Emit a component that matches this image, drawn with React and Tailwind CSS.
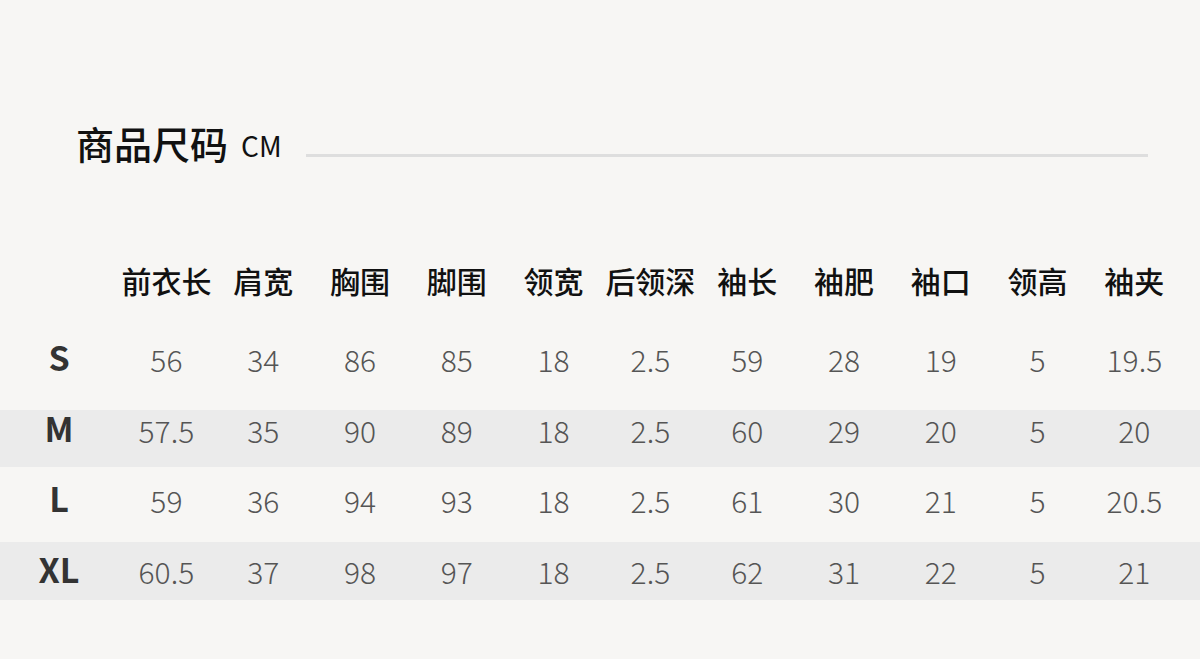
import React from "react";

const headers = ["前衣长", "肩宽", "胸围", "脚围", "领宽", "后领深", "袖长", "袖肥", "袖口", "领高", "袖夹"];

const rows = [
  { size: "S", values: ["56", "34", "86", "85", "18", "2.5", "59", "28", "19", "5", "19.5"], cls: "h-[85px] pb-[18px]" },
  { size: "M", values: ["57.5", "35", "90", "89", "18", "2.5", "60", "29", "20", "5", "20"], cls: "h-[57px] pb-[17px] bg-[#ebebeb]" },
  { size: "L", values: ["59", "36", "94", "93", "18", "2.5", "61", "30", "21", "5", "20.5"], cls: "h-[75px] pb-[9px]" },
  { size: "XL", values: ["60.5", "37", "98", "97", "18", "2.5", "62", "31", "22", "5", "21"], cls: "h-[58px] bg-[#ebebeb]" },
];

const font = { fontFamily: '"Noto Sans CJK SC", "Noto Sans", sans-serif' };

export default function App() {
  return (
    <div className="w-[1200px] h-[659px] bg-[#f7f6f4] overflow-hidden" style={font}>
      {/* title */}
      <div className="mt-[118px] h-[50px] flex items-center pl-[76px] pr-[52px]">
        <span className="text-[38px] leading-none font-medium text-[#111]">商品尺码</span>
        <span className="ml-[13px] text-[28px] leading-none text-[#111] mt-[4px]">CM</span>
        <div className="flex-1 h-[3px] bg-[#dedede] ml-[24px] self-end mb-[11px]" />
      </div>

      {/* header */}
      <div className="mt-[87px] h-[50px] grid grid-cols-[118px_repeat(11,96.8px)] items-center">
        <div />
        {headers.map((h) => (
          <div key={h} className="text-center text-[30px] leading-none font-medium text-[#111] whitespace-nowrap">
            {h}
          </div>
        ))}
      </div>

      {/* rows */}
      <div className="mt-[20px]">
        {rows.map((r) => (
          <div key={r.size} className={`grid grid-cols-[118px_repeat(11,96.8px)] items-center ${r.cls}`}>
            <div className="text-center text-[34px] leading-none font-semibold text-[#333] -mt-[4px]">{r.size}</div>
            {r.values.map((v, i) => (
              <div key={i} className="text-center text-[30px] leading-none font-light text-[#555]">
                {v}
              </div>
            ))}
          </div>
        ))}
      </div>
    </div>
  );
}
